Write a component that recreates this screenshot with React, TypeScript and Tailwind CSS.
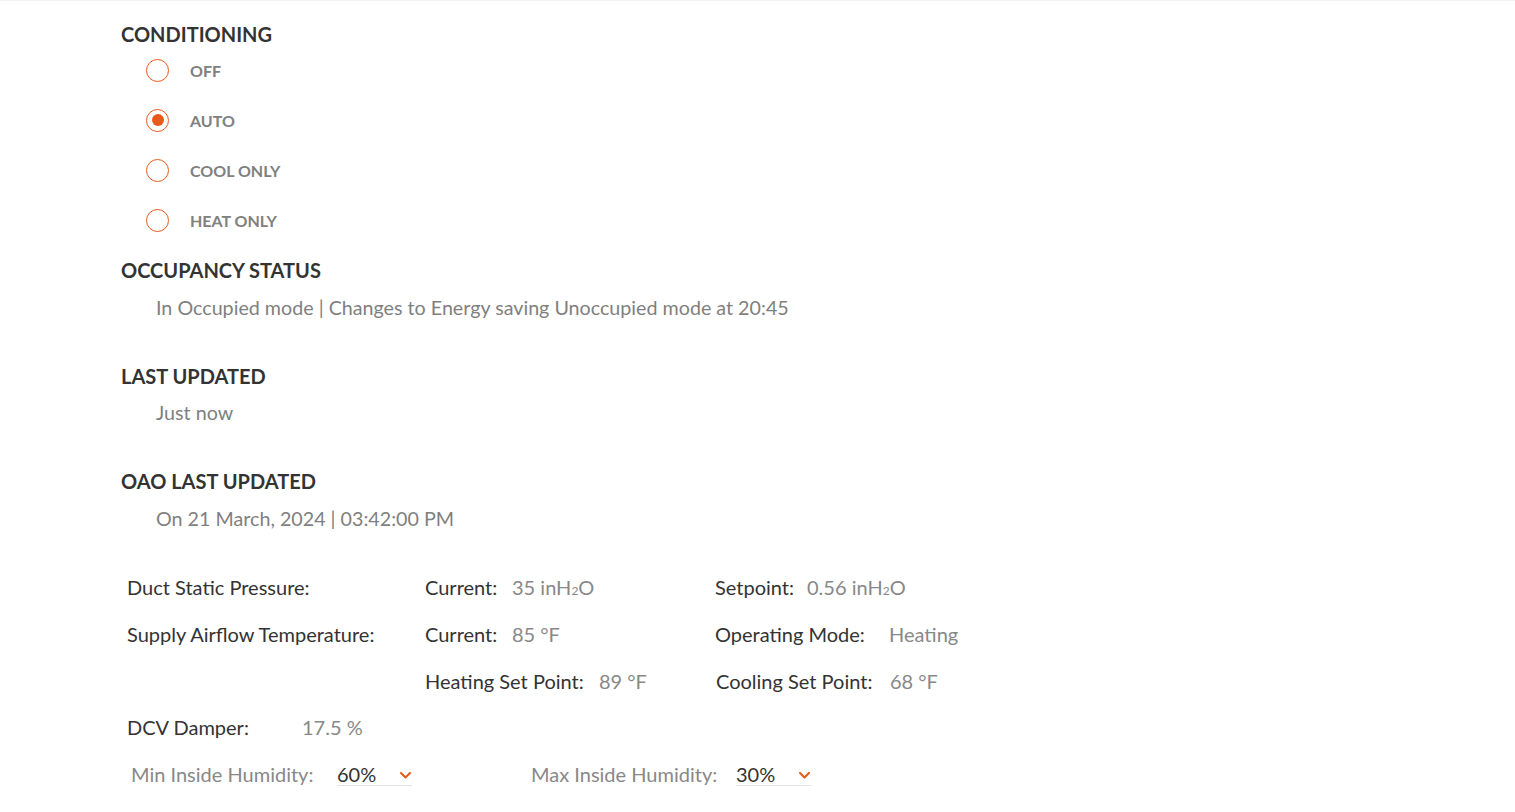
import React from 'react';

const modes = ['OFF', 'AUTO', 'COOL ONLY', 'HEAT ONLY'];

const Heading: React.FC<{ children: React.ReactNode; className?: string }> = ({ children, className = '' }) => (
  <div className={`h-[24px] flex items-center text-[20px] font-bold text-[#333333] ${className}`}>{children}</div>
);

const Info: React.FC<{ children: React.ReactNode; className?: string }> = ({ children, className = '' }) => (
  <div className={`h-[24px] flex items-center pl-[35px] text-[19.7px] text-[#7f7f7f] ${className}`}>{children}</div>
);

// label takes a fixed width so the value lines up like the original table
const Pair: React.FC<{ label: string; value: React.ReactNode; labelW: string }> = ({ label, value, labelW }) => (
  <div className="flex items-center">
    <span className={`text-[#333333] ${labelW}`}>{label}</span>
    <span className="text-[#888888]">{value}</span>
  </div>
);

const H2O = () => (
  <>
    inH<span className="text-[12px]">2</span>O
  </>
);

const HumiditySelect: React.FC<{ value: string }> = ({ value }) => (
  <div className="w-[75px] h-[24px] flex items-center justify-between border-b border-[#e3e3e3] pr-[1px]">
    <span className="text-[#333333]">{value}</span>
    <svg width="11" height="7" viewBox="0 0 11 7" className="mt-[3px]">
      <polyline points="1,1 5.5,5.5 10,1" fill="none" stroke="#e8591c" strokeWidth="2" strokeLinecap="round" strokeLinejoin="round" />
    </svg>
  </div>
);

export default function App() {
  const [mode, setMode] = React.useState('AUTO');

  return (
    <div className="min-h-screen w-full bg-white border-t border-[#f2f2f2]" style={{ fontFamily: 'Lato, "Noto Sans", sans-serif' }}>
      <div className="pl-[121px] pt-[21px]">
        <Heading>CONDITIONING</Heading>
        <div className="mt-[12px] flex flex-col gap-[26px] pl-[25px]">
          {modes.map((m) => (
            <button key={m} onClick={() => setMode(m)} className="h-[24px] flex items-center gap-[21px] text-left cursor-pointer">
              <span className="w-[23px] h-[23px] rounded-full border border-[#e8591c] flex items-center justify-center">
                {mode === m && <span className="w-[12px] h-[12px] rounded-full bg-[#e8591c]" />}
              </span>
              <span className="mt-[2px] text-[16px] font-bold text-[#808080]">{m}</span>
            </button>
          ))}
        </div>

        <Heading className="mt-[26px]">OCCUPANCY STATUS</Heading>
        <Info className="mt-[14px]">In Occupied mode | Changes to Energy saving Unoccupied mode at 20:45</Info>

        <Heading className="mt-[44px]">LAST UPDATED</Heading>
        <Info className="mt-[13px]">Just now</Info>

        <Heading className="mt-[44px]">OAO LAST UPDATED</Heading>
        <Info className="mt-[14px]">On 21 March, 2024 | 03:42:00 PM</Info>

        <div className="mt-[44px] pl-[6px] text-[20px] flex flex-col">
          <div className="h-[24px] flex items-center">
            <div className="w-[298px] text-[#333333]">Duct Static Pressure:</div>
            <div className="w-[290px]"><Pair label="Current:" value={<>35 <H2O /></>} labelW="w-[87px]" /></div>
            <Pair label="Setpoint:" value={<>0.56 <H2O /></>} labelW="w-[92px]" />
          </div>
          <div className="h-[24px] mt-[23px] flex items-center">
            <div className="w-[298px] text-[#333333]">Supply Airflow Temperature:</div>
            <div className="w-[290px]"><Pair label="Current:" value="85 °F" labelW="w-[87px]" /></div>
            <Pair label="Operating Mode:" value="Heating" labelW="w-[174px]" />
          </div>
          <div className="h-[24px] mt-[23px] flex items-center">
            <div className="w-[298px]" />
            <div className="w-[291px]"><Pair label="Heating Set Point:" value="89 °F" labelW="w-[174px]" /></div>
            <Pair label="Cooling Set Point:" value="68 °F" labelW="w-[174px]" />
          </div>
          <div className="h-[24px] mt-[22px] flex items-center">
            <div className="w-[175px] text-[#333333]">DCV Damper:</div>
            <div className="text-[#888888]">17.5 %</div>
          </div>
          <div className="h-[24px] mt-[23px] flex items-center pl-[4px]">
            <div className="w-[206px] text-[#888888]">Min Inside Humidity:</div>
            <HumiditySelect value="60%" />
            <div className="w-[205px] ml-[119px] text-[#888888]">Max Inside Humidity:</div>
            <HumiditySelect value="30%" />
          </div>
        </div>
      </div>
    </div>
  );
}
